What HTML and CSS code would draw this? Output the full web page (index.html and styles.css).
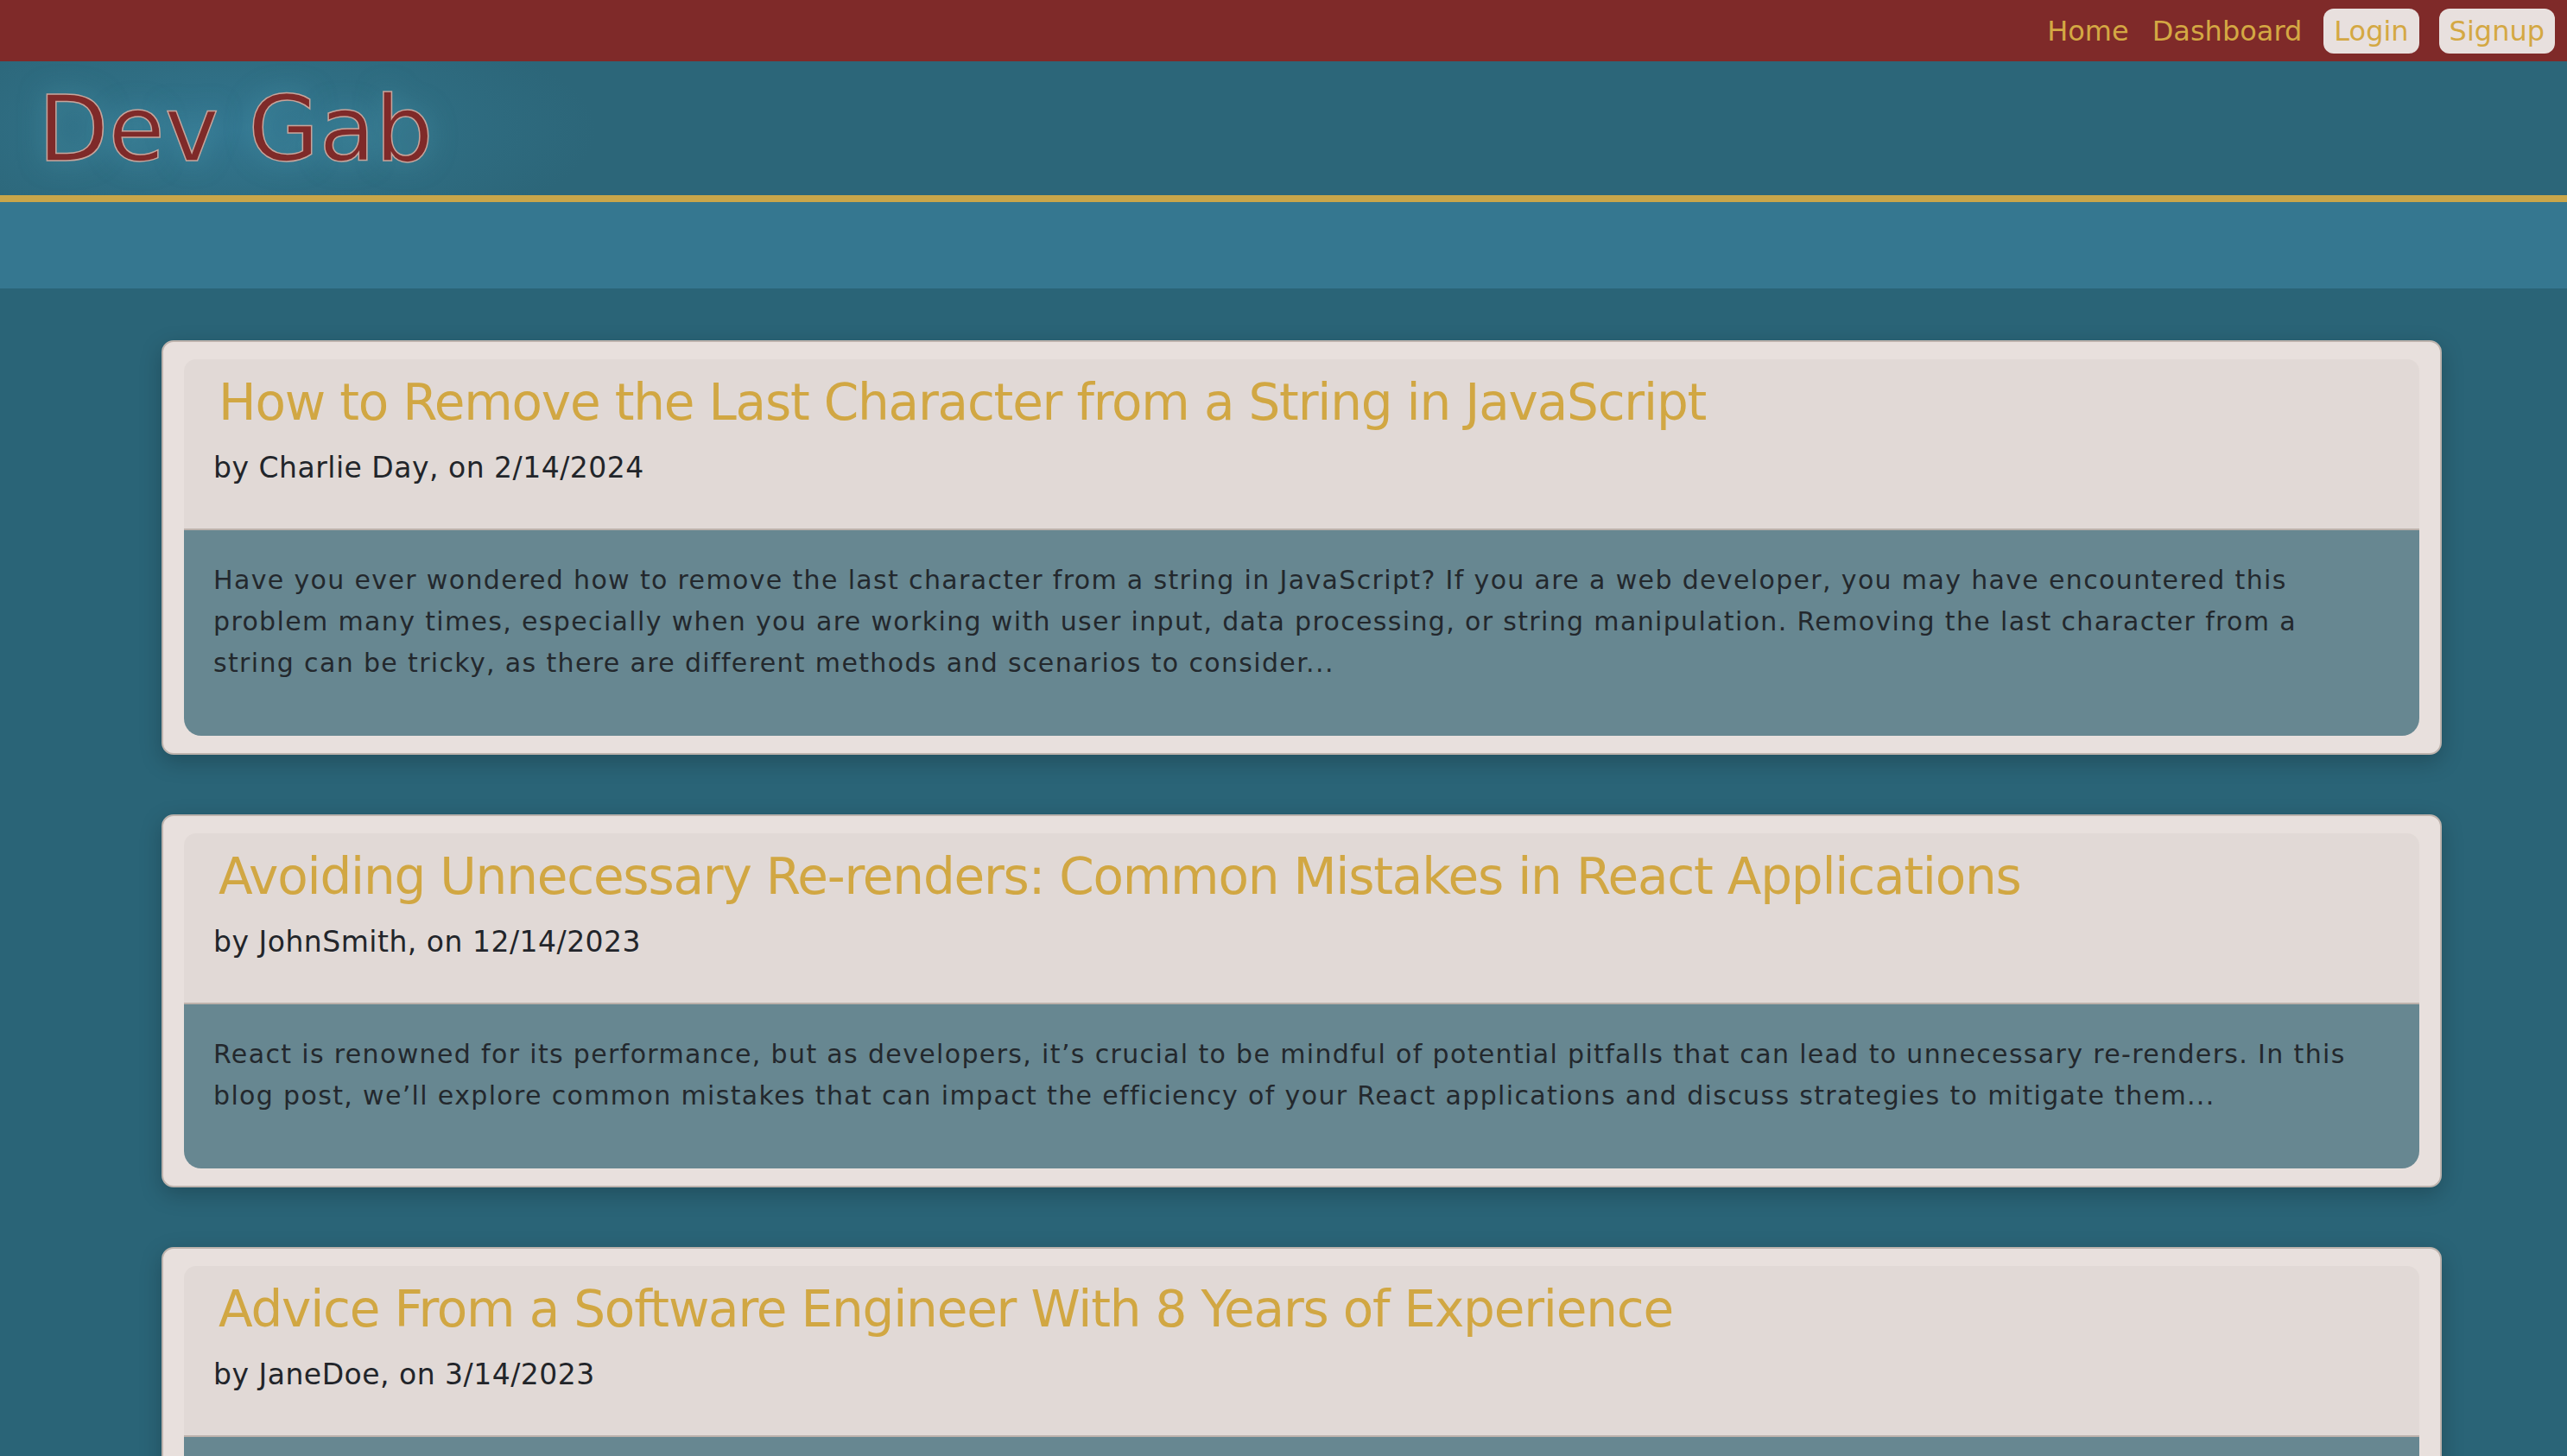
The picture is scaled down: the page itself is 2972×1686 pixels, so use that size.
FILE: index.html
```html
<!DOCTYPE html>
<html lang="en">
<head>
<meta charset="utf-8">
<title>Dev Gab</title>
<link rel="stylesheet" href="styles.css">
</head>
<body>
<nav class="topnav">
  <a class="nav-link" href="#">Home</a>
  <a class="nav-link" href="#">Dashboard</a>
  <a class="nav-link nav-btn" href="#">Login</a>
  <a class="nav-link nav-btn" href="#">Signup</a>
</nav>
<header class="site-header">
  <h1 class="logo">Dev Gab</h1>
</header>
<div class="band"></div>
<main class="posts">
  <article class="post">
    <div class="post-head">
      <h2 class="post-title">How to Remove the Last Character from a String in JavaScript</h2>
      <p class="post-meta">by Charlie Day, on 2/14/2024</p>
    </div>
    <div class="post-body">
      <p>Have you ever wondered how to remove the last character from a string in JavaScript? If you are a web developer, you may have encountered this problem many times, especially when you are working with user input, data processing, or string manipulation. Removing the last character from a string can be tricky, as there are different methods and scenarios to consider...</p>
    </div>
  </article>
  <article class="post">
    <div class="post-head">
      <h2 class="post-title">Avoiding Unnecessary Re-renders: Common Mistakes in React Applications</h2>
      <p class="post-meta">by JohnSmith, on 12/14/2023</p>
    </div>
    <div class="post-body">
      <p>React is renowned for its performance, but as developers, it’s crucial to be mindful of potential pitfalls that can lead to unnecessary re-renders. In this blog post, we’ll explore common mistakes that can impact the efficiency of your React applications and discuss strategies to mitigate them...</p>
    </div>
  </article>
  <article class="post">
    <div class="post-head">
      <h2 class="post-title">Advice From a Software Engineer With 8 Years of Experience</h2>
      <p class="post-meta">by JaneDoe, on 3/14/2023</p>
    </div>
    <div class="post-body">
      <p>After eight years of writing software, here are the lessons I wish someone had told me on day one...</p>
    </div>
  </article>
</main>
</body>
</html>
```
FILE: styles.css
```css
* { box-sizing: border-box; }
html, body { margin: 0; padding: 0; }
body {
  background: #2a6477;
  font-family: "DejaVu Sans", sans-serif;
  color: #23272c;
}
.topnav {
  height: 71px;
  background: #7f2a29;
  display: flex;
  justify-content: flex-end;
  align-items: center;
  gap: 23px;
  padding: 0 14px 0 0;
}
.nav-link {
  color: #d4a843;
  text-decoration: none;
  font-size: 32px;
  padding: 6px 2px;
  line-height: 40px;
  border-radius: 12px;
}
.nav-btn {
  background: #e8e0de;
  padding: 6px 12px;
}
.site-header {
  height: 163px;
  background: radial-gradient(ellipse 420px 140px at 270px 80px, #337690 0%, #2f6d82 55%, #2c6679 100%);
  border-bottom: 8px solid #c9a64a;
  padding: 8px 0 0 44px;
  display: flex;
  align-items: center;
}
.logo {
  margin: 0;
  font-weight: normal;
  font-size: 106px;
  line-height: 1;
  color: #7f2a29;
  -webkit-text-stroke: 1.5px #c7a59c;
  text-shadow: 0 0 30px rgba(80, 160, 180, 0.55);
  padding-bottom: 6px;
}
.band {
  height: 100px;
  background: #357790;
}
.posts {
  padding: 60px 145px 20px 187px;
  display: flex;
  flex-direction: column;
  gap: 69px;
}
.post {
  background: #e8e0dd;
  border: 2px solid #bdb3ad;
  border-radius: 14px;
  padding: 20px 24px;
  box-shadow: 0 8px 26px rgba(0, 0, 0, 0.22);
}
.post-head {
  background: #e1d9d6;
  border-radius: 14px 14px 0 0;
  border-bottom: 2px solid #bcb1ab;
  padding: 14px 34px 0 34px;
  height: 198px;
}
.post-title {
  margin: 0;
  font-weight: normal;
  font-size: 58px;
  letter-spacing: -1.2px;
  line-height: 72px;
  color: #d1a743;
  padding-left: 6px;
}
.post-meta {
  margin: 21px 0 0 0;
  font-size: 33px;
  letter-spacing: 0.5px;
  line-height: 37px;
  color: #22252a;
}
.post-body {
  background: #678791;
  border-radius: 0 0 20px 20px;
  padding: 34px 70px 60px 34px;
}
.post-body p {
  margin: 0;
  font-size: 30px;
  letter-spacing: 1.35px;
  line-height: 48px;
  color: #23282d;
}
```
